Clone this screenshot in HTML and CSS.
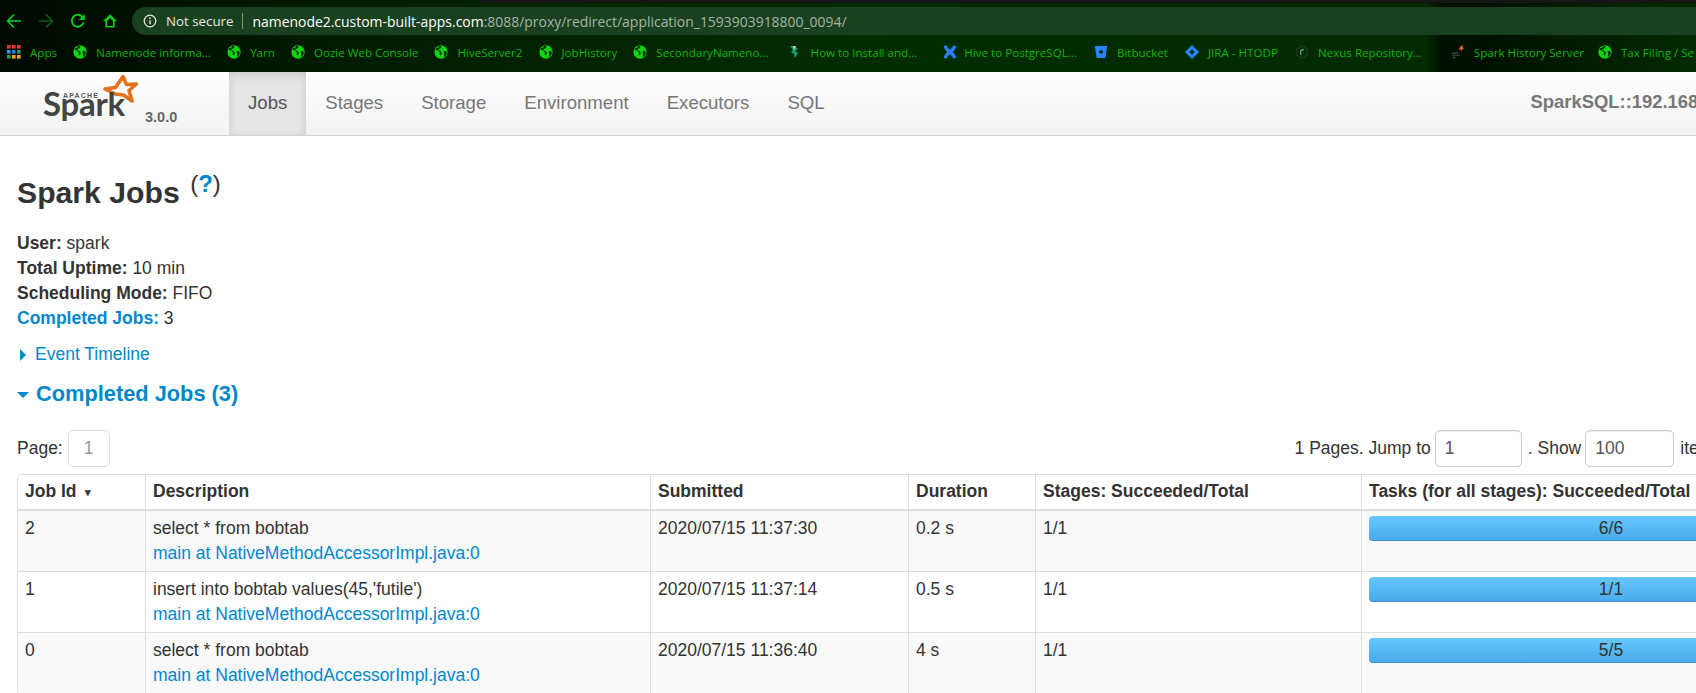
FILE: index.html
```html
<!DOCTYPE html>
<html lang="en">
<head>
<meta charset="utf-8">
<title>Spark Jobs</title>
<link rel="stylesheet" href="styles.css">
</head>
<body>
<svg class="defs" width="0" height="0" aria-hidden="true">
  <symbol id="globe" viewBox="0 0 16 16">
    <circle cx="8" cy="8" r="7.600" fill="#10d410"/>
    <path d="M6 .8 4.900 3 2.700 3.400 2 5.500l3 1.200 1.800 1.700-.5 2 1.600 1.800 1-3.300-2-2.200L5 6V4.600l2.300-.7 1.400-2.600zM10.600 7.200l3.400-.4.7 3.200-2.300 3.400-1.300-.6.7-3z" fill="#032b08"/>
  </symbol>
</svg>
<div class="browser">
  <div class="tabstrip"></div>
  <div class="toolbar">
    <div class="nav-icons">
      <svg class="tool" viewBox="0 0 16 16"><path d="M15 8H2M8 1.500 1.600 8 8 14.500" fill="none" stroke="#0ccf14" stroke-width="1.700"/></svg>
      <svg class="tool" viewBox="0 0 16 16"><path d="M1 8h13M8 1.500 14.400 8 8 14.500" fill="none" stroke="#0b5c10" stroke-width="1.700"/></svg>
      <svg class="tool" viewBox="0 0 16 16"><path d="M13.600 9.400A6 6 0 1 1 12.200 3.600L14 5.600" fill="none" stroke="#0ccf14" stroke-width="1.900"/><path d="M14.800 1v6h-6z" fill="#0ccf14"/></svg>
      <svg class="tool home" viewBox="0 0 16 16"><path d="M8 1.300 1 8.200h2.400v6.400h9.200V8.200H15zM5 8l3-3 3 3v5H5z" fill="#0ccf14" fill-rule="evenodd"/></svg>
    </div>
    <div class="omnibox">
      <svg class="info" viewBox="0 0 16 16"><circle cx="8" cy="8" r="6.600" fill="none" stroke="#e8e8e8" stroke-width="1.400"/><path d="M7.200 7h1.600v4.800H7.200zM7.200 4.100h1.600v1.600H7.200z" fill="#e8e8e8"/></svg>
      <span class="not-secure">Not secure</span>
      <span class="url"><span class="host">namenode2.custom-built-apps.com</span>:8088/proxy/redirect/application_1593903918800_0094/</span>
    </div>
  </div>
  <div class="bookmarks">
    <a class="mark apps-mark">
      <svg class="icon grid" viewBox="0 0 14 14">
        <rect x="0" y="0" width="3.600" height="3.600" fill="#e33"/><rect x="5" y="0" width="3.600" height="3.600" fill="#e33"/><rect x="10" y="0" width="3.600" height="3.600" fill="#e33"/>
        <rect x="0" y="5" width="3.600" height="3.600" fill="#39f"/><rect x="5" y="5" width="3.600" height="3.600" fill="#2b7be0"/><rect x="10" y="5" width="3.600" height="3.600" fill="#396"/>
        <rect x="0" y="10" width="3.600" height="3.600" fill="#396"/><rect x="5" y="10" width="3.600" height="3.600" fill="#fa0"/><rect x="10" y="10" width="3.600" height="3.600" fill="#fa0"/>
      </svg>Apps</a>
    <a class="mark"><svg class="icon"><use href="#globe"/></svg>Namenode informa...</a>
    <a class="mark"><svg class="icon"><use href="#globe"/></svg>Yarn</a>
    <a class="mark"><svg class="icon"><use href="#globe"/></svg>Oozie Web Console</a>
    <a class="mark"><svg class="icon"><use href="#globe"/></svg>HiveServer2</a>
    <a class="mark"><svg class="icon"><use href="#globe"/></svg>JobHistory</a>
    <a class="mark"><svg class="icon"><use href="#globe"/></svg>SecondaryNameno...</a>
    <a class="mark howto-mark"><svg class="icon" viewBox="0 0 14 14"><path d="M2 1h5l3 3-3 2 3 2-3 5-1-4-3-2 2-2z" fill="#1d9c7a"/><path d="M5 1h3L6 5z" fill="#c9d6cf"/></svg>How to Install and...</a>
    <a class="mark wide-icon"><svg class="icon" viewBox="0 0 16 16"><path d="M.8 1.400 4 .4c1 2.600 2.400 4.600 4 4.600s3-2 4-4.600l3.200 1c-.9 3-2.400 5.200-4.200 6.600 1.800 1.400 3.300 3.600 4.200 6.600l-3.200 1c-1-2.600-2.400-4.600-4-4.600s-3 2-4 4.600l-3.200-1C1.700 11.600 3.200 9.400 5 8 3.200 6.600 1.700 4.400.8 1.400z" fill="#2684ff"/></svg>Hive to PostgreSQL...</a>
    <a class="mark"><svg class="icon" viewBox="0 0 14 14"><path d="M.8 1h12.400l-1.800 12H2.600z" fill="#2684ff"/><path d="M5 5.500h4l-.5 3h-3z" fill="#02250a"/></svg>Bitbucket</a>
    <a class="mark"><svg class="icon" viewBox="0 0 16 16"><path d="M8 0 16 8 8 16 0 8zM8 5 5 8l3 3 3-3z" fill="#2684ff" fill-rule="evenodd"/></svg>JIRA - HTODP</a>
    <a class="mark"><svg class="icon" viewBox="0 0 14 16"><path d="M7 1 13 4.500v7L7 15 1 11.500v-7z" fill="none" stroke="#24382c" stroke-width="1.300"/><path d="M5.500 11V6.500L9 5" fill="none" stroke="#4cc4a4" stroke-width="1.300"/></svg>Nexus Repository...</a>
    <a class="mark spark-mark"><svg class="icon" viewBox="0 0 16 16"><path d="M11 1.500 13 0l.3 2.500 2 1.200-2.300.8-.5 2.500-1.500-2-2.300.1 1.400-2z" fill="#d9661f"/><path d="M1 11h9v1.400H1zM1 8.500h7V10H1zM2 13.500h3V15H2z" fill="#4a4a3c"/></svg>Spark History Server</a>
    <a class="mark tax-mark"><svg class="icon"><use href="#globe"/></svg>Tax Filing / Se</a>
  </div>
</div>

<header class="spark-nav">
  <div class="brand">
    <svg class="star" viewBox="0 0 36 28"><path d="M21 1.500 24.500 9.500 34.500 9 27 15.500 30 26 21.500 20 13 19 3 14 13.500 12.500z" fill="none" stroke="#e2711d" stroke-width="3.600" stroke-linejoin="round"/></svg>
    <span class="apache">APACHE</span>
    <span class="spark-word">Spark</span>
    <span class="version">3.0.0</span>
  </div>
  <nav class="tabs">
    <a class="tab active">Jobs</a>
    <a class="tab">Stages</a>
    <a class="tab">Storage</a>
    <a class="tab">Environment</a>
    <a class="tab">Executors</a>
    <a class="tab">SQL</a>
  </nav>
  <span class="app-title">SparkSQL::192.168.10.21 application UI</span>
</header>

<main class="content">
  <h3 class="title">Spark Jobs <sup class="help">(<a>?</a>)</sup></h3>
  <ul class="summary">
    <li><strong>User:</strong> spark</li>
    <li><strong>Total Uptime:</strong> 10 min</li>
    <li><strong>Scheduling Mode:</strong> FIFO</li>
    <li><a class="link"><strong>Completed Jobs:</strong></a> 3</li>
  </ul>
  <div class="timeline"><span class="arrow-right"></span><a class="link">Event Timeline</a></div>
  <h4 class="collapse-head"><span class="arrow-down"></span>Completed Jobs (3)</h4>
  <div class="pager">
    <div class="pager-left">Page: <span class="page-box">1</span></div>
    <div class="pager-right">1 Pages. Jump to <span class="num-box">1</span> . Show <span class="num-box show">100</span> items in a page. Go</div>
  </div>
  <table class="jobs">
    <colgroup><col class="c1"><col class="c2"><col class="c3"><col class="c4"><col class="c5"><col class="c6"></colgroup>
    <thead>
      <tr><th>Job Id <span class="sort">▾</span></th><th>Description</th><th>Submitted</th><th>Duration</th><th>Stages: Succeeded/Total</th><th>Tasks (for all stages): Succeeded/Total</th></tr>
    </thead>
    <tbody>
      <tr>
        <td>2</td>
        <td>select * from bobtab<br><a class="link">main at NativeMethodAccessorImpl.java:0</a></td>
        <td>2020/07/15 11:37:30</td><td>0.2 s</td><td>1/1</td>
        <td><div class="progress">6/6</div></td>
      </tr>
      <tr>
        <td>1</td>
        <td>insert into bobtab values(45,'futile')<br><a class="link">main at NativeMethodAccessorImpl.java:0</a></td>
        <td>2020/07/15 11:37:14</td><td>0.5 s</td><td>1/1</td>
        <td><div class="progress">1/1</div></td>
      </tr>
      <tr>
        <td>0</td>
        <td>select * from bobtab<br><a class="link">main at NativeMethodAccessorImpl.java:0</a></td>
        <td>2020/07/15 11:36:40</td><td>4 s</td><td>1/1</td>
        <td><div class="progress">5/5</div></td>
      </tr>
    </tbody>
  </table>
</main>
</body>
</html>
```
FILE: styles.css
```css
* { box-sizing: border-box; }
html, body { margin: 0; height: 693px; overflow: hidden; background: #fff; }
body { font-family: "Liberation Sans", Arial, sans-serif; font-size: 17.5px; line-height: 25px; color: #333; width: 1696px; }
.defs { position: absolute; }

.browser { height: 72px; background: linear-gradient(90deg, #000900 0, #011c00 20%, #032c00 50%, #032a00 84%, #011000 85%, #011000 87%, #032a00 100%); font-family: "Open Sans", "Noto Sans", sans-serif; overflow: hidden; }
.tabstrip { height: 7px; background: linear-gradient(#161616, #161616) no-repeat 481px 0 / 100% 3px; }
.toolbar { height: 28px; display: flex; align-items: center; }
.nav-icons { display: flex; width: 132px; padding-left: 6px; gap: 16px; align-items: center; }
.tool { width: 16px; height: 16px; flex: none; }
.omnibox { flex: 1; height: 28px; background: #1a411f; border-radius: 14px 0 0 14px; display: flex; align-items: center; padding-left: 11px; color: #a4b3a6; font-size: 13.95px; white-space: nowrap; }
.info { width: 14px; height: 14px; margin-right: 9px; flex: none; }
.not-secure { color: #e4e8e4; font-size: 13.3px; padding-right: 9px; border-right: 1px solid #7f907f; line-height: 16px; margin-right: 9px; }
.host { color: #fff; }

.bookmarks { height: 37px; display: flex; align-items: center; padding-left: 7px; padding-bottom: 3px; gap: 16px; white-space: nowrap; font-size: 11.6px; color: #0cb30c; overflow: hidden; }
.mark { display: flex; align-items: center; gap: 9px; }
.icon { width: 14px; height: 14px; flex: none; }
.howto-mark { margin-left: 3px; }
.wide-icon { gap: 7px; margin-left: 10px; }
.wide-icon ~ .mark { margin-left: 1px; }
.wide-icon ~ .spark-mark { margin-left: 13px; }
.wide-icon ~ .tax-mark { margin-left: -2px; }

.spark-nav { height: 64px; display: flex; background: linear-gradient(180deg, #fff, #f2f2f2); border-bottom: 1px solid #d4d4d4; white-space: nowrap; overflow: hidden; }
.brand { width: 229px; flex: none; position: relative; }
.star { position: absolute; left: 102px; top: 3px; width: 36px; height: 28px; }
.apache { position: absolute; left: 63px; top: 19px; font-size: 7px; line-height: 9px; font-weight: 700; letter-spacing: 1.200px; color: #555; }
.spark-word { position: absolute; left: 43px; top: 15px; font-family: "Lato", sans-serif; font-weight: 700; font-size: 33px; line-height: 32px; letter-spacing: -.3px; color: #444; }
.version { position: absolute; left: 145px; top: 36px; font-size: 14.5px; line-height: 18px; font-weight: 700; color: #666; }
.tabs { display: flex; }
.tab { padding: 0 19px; font-size: 18.6px; line-height: 62px; color: #777; }
.tab.active { color: #555; background: #e5e5e5; box-shadow: inset 0 3px 8px rgba(0,0,0,.125); }
.app-title { margin-left: 687px; font-size: 18.4px; line-height: 60px; font-weight: 700; color: #777; }

.content { padding: 0 0 0 17px; }
.title { margin: 0; padding-top: 37px; height: 95px; font-size: 30.2px; line-height: 40px; font-weight: 700; }
.help { font-size: 24px; font-weight: 400; line-height: 0; vertical-align: 11px; margin-left: 2px; }
.help a { font-weight: 700; }
.help a, .link { color: #0088cc; }
.summary { list-style: none; margin: 0; padding: 0; }
.timeline { margin-top: 11px; height: 25px; display: flex; align-items: center; }
.arrow-right { width: 0; height: 0; border-left: 6px solid #0088cc; border-top: 6px solid transparent; border-bottom: 6px solid transparent; margin: 0 9px 0 3px; }
.collapse-head { margin: 12px 0 0; height: 30px; display: flex; align-items: center; font-size: 21.800px; line-height: 30px; color: #0088cc; font-weight: 700; }
.arrow-down { width: 0; height: 0; border-top: 6px solid #0088cc; border-left: 6px solid transparent; border-right: 6px solid transparent; margin: 2px 7px 0 0; }

.pager { display: flex; justify-content: space-between; margin-top: 21px; height: 37px; white-space: nowrap; width: 1815px; }
.pager-left { display: flex; align-items: center; gap: 5px; height: 37px; }
.pager-right { display: flex; align-items: center; gap: 6px; height: 37px; }
.page-box { width: 42px; height: 37px; border: 1px solid #ddd; border-radius: 5px; display: flex; align-items: center; justify-content: center; color: #999; }
.num-box { width: 87px; height: 37px; margin-left: -2px; border: 1px solid #ccc; border-radius: 5px; display: flex; align-items: center; padding-left: 9px; color: #555; box-shadow: inset 0 1px 1px rgba(0,0,0,.075); }
.num-box.show { width: 89px; }

.jobs { border-collapse: separate; border-spacing: 0; table-layout: fixed; width: 1850px; margin-top: 7px; border: 1px solid #ddd; border-radius: 5px; }
.c1 { width: 127px; } .c2 { width: 505px; } .c3 { width: 258px; } .c4 { width: 127px; } .c5 { width: 326px; } .c6 { width: 507px; }
.jobs th, .jobs td { text-align: left; vertical-align: top; padding: 5px 7px 5px; border-left: 1px solid #ddd; white-space: nowrap; }
.jobs th:first-child, .jobs td:first-child { border-left: 0; }
.jobs th { height: 34px; padding: 4px 7px; border-bottom: 2px solid #ddd; font-weight: 700; }
.jobs td { height: 61px; border-bottom: 1px solid #ddd; }
.jobs tbody tr:nth-child(odd) td { background: #f9f9f9; }
.sort { font-size: 11px; margin-left: 4px; vertical-align: 1px; }
.progress { width: 484px; height: 25px; border-radius: 4px; background: linear-gradient(180deg, #66c8ff, #4aa9eb); box-shadow: inset 0 -1px 0 rgba(0,0,0,.15); text-align: center; line-height: 25px; }
```
